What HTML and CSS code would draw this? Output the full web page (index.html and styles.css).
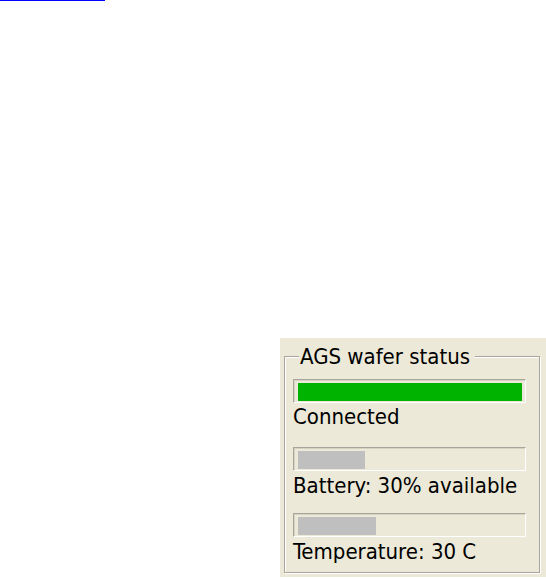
FILE: index.html
```html
<!DOCTYPE html>
<html lang="en">
<head>
    <meta charset="UTF-8">
    <title>AGS wafer status</title>
    <link rel="stylesheet" href="styles.css">
</head>
<body>

    <div class="link-line"></div>

    <div class="panel">
        <div class="group">
            <div class="group-title">AGS wafer status</div>

            <div class="status-list">
                <div class="status-row status-row--main">
                    <div class="bar"><div class="bar-fill bar-fill--ok" style="width: 100%"></div></div>
                    <div class="status-label">Connected</div>
                </div>

                <div class="status-row">
                    <div class="bar"><div class="bar-fill" style="width: 30%"></div></div>
                    <div class="status-label">Battery: 30% available</div>
                </div>

                <div class="status-row">
                    <div class="bar"><div class="bar-fill" style="width: 35%"></div></div>
                    <div class="status-label">Temperature: 30 C</div>
                </div>
            </div>
        </div>
    </div>

</body>
</html>
```

FILE: styles.css
```css
:root {
    --panel-bg: #ece9d8;
    --etch-dark: #a7a59c;
    --etch-light: #ffffff;
    --fill-ok: #00b300;
    --fill-idle: #bfbfbf;
}

body {
    margin: 0;
    background: #fff;
    font-family: 'DejaVu Sans Condensed', 'DejaVu Sans', sans-serif;
    font-size: 22px;
    line-height: 24px;
    color: #000;
}

.link-line {
    width: 105px;
    height: 1px;
    background: #0000ff;
}

.panel {
    margin: 337px 0 0 280px;
    padding: 18px 6px 4px 4px;
    background: var(--panel-bg);
}

.group {
    display: flex;
    flex-direction: column;
    padding: 0 13px 8px 8px;
    border: 1px solid var(--etch-dark);
    box-shadow: inset 1px 1px 0 var(--etch-light), 1px 1px 0 var(--etch-light);
}

.group-title {
    align-self: flex-start;
    margin: -12px 0 0 6px;
    padding: 0 5px 0 1px;
    background: var(--panel-bg);
}

.status-list {
    display: flex;
    flex-direction: column;
    gap: 15px;
    margin-top: 10px;
}

.status-row {
    display: flex;
    flex-direction: column;
    gap: 3px;
}

.status-row--main {
    gap: 2px;
    margin-bottom: 3px;
}

.bar {
    height: 19px;
    padding: 3px 3px 0 4px;
    border-top: 1px solid var(--etch-dark);
    border-left: 1px solid var(--etch-dark);
    border-right: 1px solid var(--etch-light);
    border-bottom: 1px solid var(--etch-light);
    box-shadow: inset 1px 1px 0 #d6d3c4;
}

.bar-fill {
    height: 18px;
    background: var(--fill-idle);
}

.bar-fill--ok {
    background: var(--fill-ok);
}

.status-label {
    white-space: nowrap;
}
```
